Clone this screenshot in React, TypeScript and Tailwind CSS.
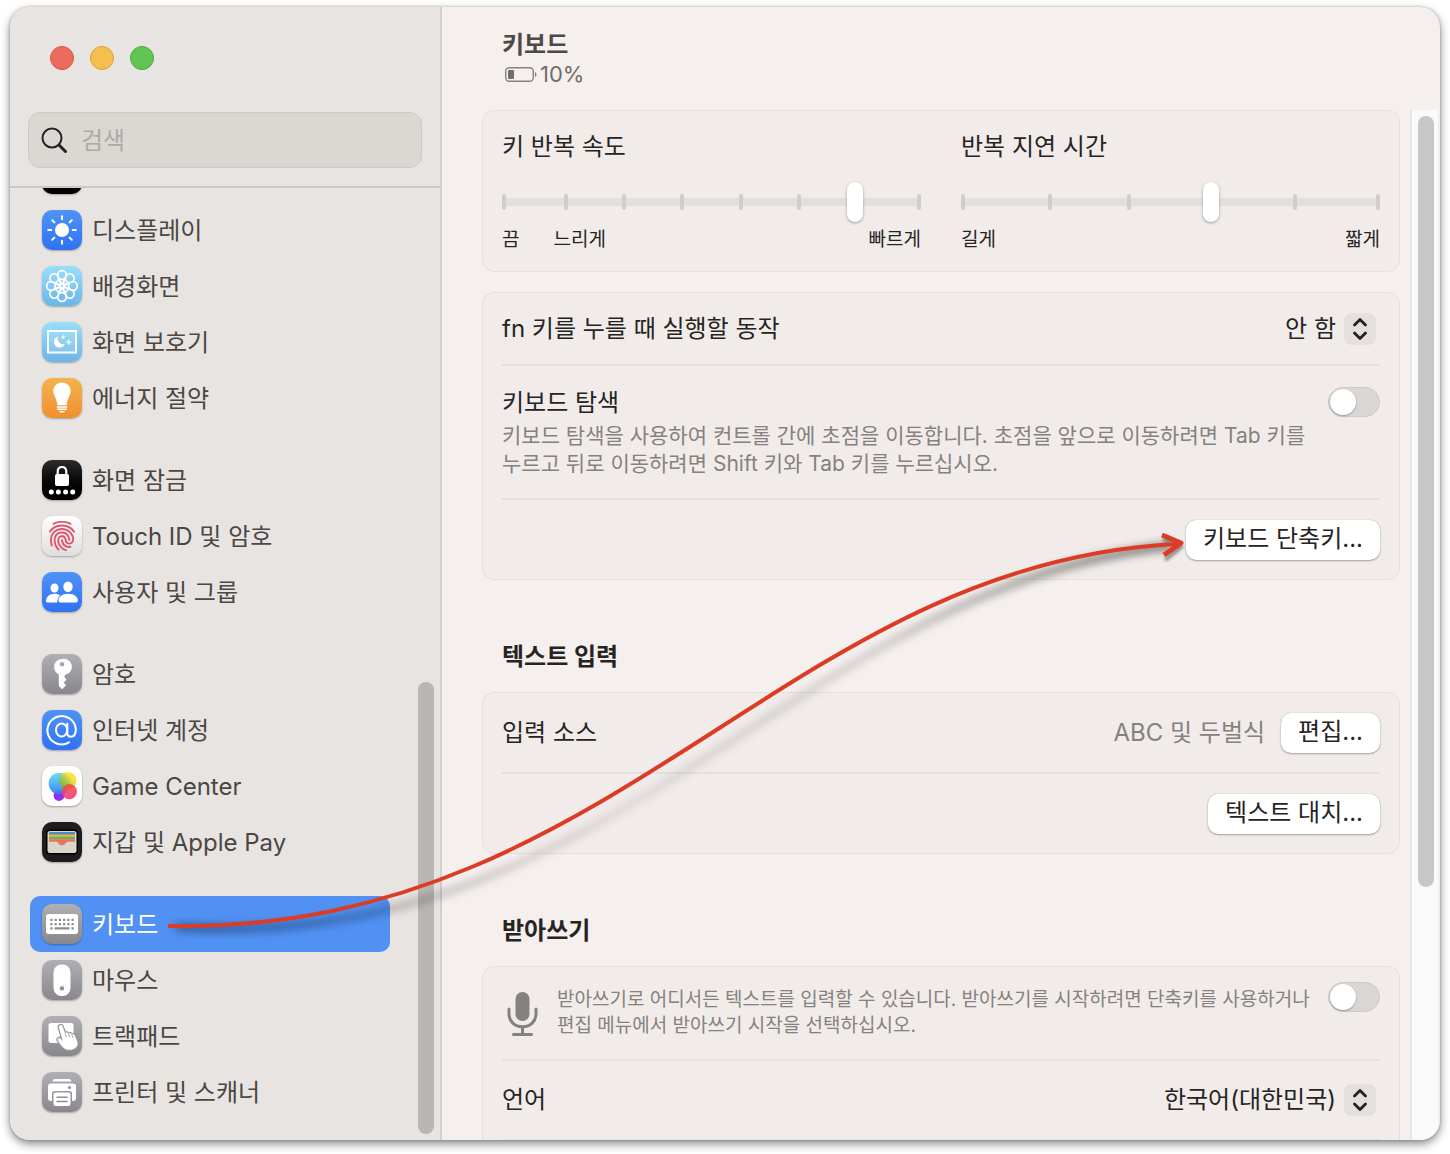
import { useState } from 'react';
import type { ReactNode } from 'react';
import { IoFingerPrint } from 'react-icons/io5';

interface NavItem {
  id: string;
  label: string;
  tile: string;
  icon: ReactNode;
}

const BLUE = 'bg-linear-to-b from-[#4f93f6] to-[#2f72f3]';
const SKY = 'bg-linear-to-b from-[#9adef8] to-[#6bb5e8]';
const GRAY = 'bg-linear-to-b from-[#b0b0b4] to-[#88888c]';
const BLACK = 'bg-linear-to-b from-[#2c2c2c] to-black';

function Glyph({ children }: { children: ReactNode }) {
  return (
    <svg viewBox="0 0 40 40" className="size-10" aria-hidden="true">
      {children}
    </svg>
  );
}

const EIGHT = [0, 45, 90, 135, 180, 225, 270, 315];

const groups: NavItem[][] = [
  [
    { id: 'dock', label: '데스크탑 및 Dock', tile: 'bg-black', icon: null },
    {
      id: 'display',
      label: '디스플레이',
      tile: BLUE,
      icon: (
        <Glyph>
          <circle cx="20" cy="20" r="7" fill="#fff" />
          {EIGHT.map((a) => (
            <path
              key={a}
              d="M20 6.2v3"
              stroke="#fff"
              strokeWidth="2"
              strokeLinecap="round"
              transform={`rotate(${a} 20 20)`}
            />
          ))}
        </Glyph>
      ),
    },
    {
      id: 'wallpaper',
      label: '배경화면',
      tile: SKY,
      icon: (
        <Glyph>
          <g fill="none" stroke="#fff" strokeWidth="1.7">
            {EIGHT.map((a) => (
              <g key={a} transform={`rotate(${a} 20 20)`}>
                <circle cx="20" cy="9" r="4.300" />
                <path d="M17 12.200 20 19l3-6.800" />
              </g>
            ))}
          </g>
          <circle cx="20" cy="20" r="2.400" fill="#fff" />
          <circle cx="20" cy="20" r="1" fill="#83c8ef" />
        </Glyph>
      ),
    },
    {
      id: 'screensaver',
      label: '화면 보호기',
      tile: SKY,
      icon: (
        <Glyph>
          <rect x="6" y="9" width="28" height="21.500" fill="#fff" fillOpacity=".12" stroke="#fff" strokeWidth="2" />
          <path d="M16.200 14.500a5.600 5.600 0 1 0 6.600 7.400 5.400 5.400 0 0 1-6.600-7.400Z" fill="#fff" />
          <path d="m21.300 12.500.7 1.800 1.800.7-1.800.7-.7 1.800-.7-1.800-1.800-.7 1.800-.7Z" fill="#fff" />
          <path d="m26.700 16.700.9 2.500 2.500.9-2.500.9-.9 2.500-.9-2.500-2.500-.9 2.500-.9Z" fill="#fff" />
        </Glyph>
      ),
    },
    {
      id: 'energy',
      label: '에너지 절약',
      tile: 'bg-linear-to-b from-[#f2b350] to-[#f08f30]',
      icon: (
        <Glyph>
          <path
            d="M20 4.500c-5 0-8.700 3.800-8.700 8.500 0 4.200 3 6.200 3.900 13.200.1.700.5 1 1.100 1h7.400c.6 0 1-.3 1.100-1 .9-7 3.900-9 3.900-13.200 0-4.700-3.700-8.500-8.700-8.500Z"
            fill="#fff"
          />
          <path d="M15.300 28.900h9.400M15.700 31.300h8.600" stroke="#fff" strokeWidth="1.500" strokeLinecap="round" />
          <path d="M17 33h6c-.4 1-1.500 1.500-3 1.500s-2.600-.5-3-1.500Z" fill="#fff" />
        </Glyph>
      ),
    },
  ],
  [
    {
      id: 'lock',
      label: '화면 잠금',
      tile: BLACK,
      icon: (
        <Glyph>
          <path d="M15.700 15v-3.200c0-2.800 1.700-4.800 4.300-4.800s4.300 2 4.300 4.800V15" fill="none" stroke="#fff" strokeWidth="2.200" />
          <rect x="13" y="14" width="14" height="12" rx="2" fill="#fff" />
          {[9.3, 16.4, 23.6, 30.7].map((x) => (
            <circle key={x} cx={x} cy="32" r="2.500" fill="#fff" />
          ))}
        </Glyph>
      ),
    },
    {
      id: 'touchid',
      label: 'Touch ID 및 암호',
      tile: 'bg-linear-to-b from-white to-[#dedede]',
      icon: <IoFingerPrint className="size-8 text-[#e0566f]" />,
    },
    {
      id: 'users',
      label: '사용자 및 그룹',
      tile: BLUE,
      icon: (
        <Glyph>
          <ellipse cx="12.500" cy="16" rx="4" ry="4.500" fill="#fff" />
          <path d="M4 29c0-4 3.600-7.200 8.500-7.200 2.400 0 4.300.6 5.700 1.700-1.900 1.500-3 3.900-3 6.900H5.500C4.500 30.400 4 30 4 29Z" fill="#fff" />
          <ellipse cx="26" cy="14.800" rx="4.700" ry="5.200" fill="#fff" />
          <path d="M16.500 28.600c0-4 4.200-6.800 9.700-6.800s9.700 2.800 9.700 6.800c0 1.200-.6 1.800-1.800 1.800H18.300c-1.200 0-1.800-.6-1.800-1.800Z" fill="#fff" />
        </Glyph>
      ),
    },
  ],
  [
    {
      id: 'passwords',
      label: '암호',
      tile: GRAY,
      icon: (
        <Glyph>
          <path
            fillRule="evenodd"
            d="M20 5a8 8 0 0 0-3.200 15.300V32l3.400 3.200 3.800-4-2.300-2.500 2.800-2.900-2.300-3.200 1.600-2A8 8 0 0 0 20 5Zm0 3a2.300 2.300 0 1 1 0 4.600A2.300 2.300 0 0 1 20 8Z"
            fill="#fff"
          />
        </Glyph>
      ),
    },
    {
      id: 'accounts',
      label: '인터넷 계정',
      tile: BLUE,
      icon: (
        <Glyph>
          <g fill="none" stroke="#fff" strokeWidth="2" strokeLinecap="round">
            <path d="M27 32.400a14.200 14.200 0 1 1 6.800-13.200c0 4.600-1.800 7.500-4.900 7.500-2.400 0-3.600-1.600-3.600-4V13.800" />
            <ellipse cx="19.600" cy="20" rx="5.600" ry="6.500" />
          </g>
        </Glyph>
      ),
    },
    {
      id: 'gamecenter',
      label: 'Game Center',
      tile: 'bg-white',
      icon: (
        <Glyph>
          <defs>
            <linearGradient id="gc-blue" x1="0" y1="0" x2="0" y2="1">
              <stop offset="0" stopColor="#5fdcf5" />
              <stop offset="1" stopColor="#2c7df0" />
            </linearGradient>
            <linearGradient id="gc-yellow" x1="1" y1="0" x2="0" y2="1">
              <stop offset=".3" stopColor="#fbe02a" />
              <stop offset="1" stopColor="#3fae3c" />
            </linearGradient>
            <linearGradient id="gc-red" x1="0" y1="0" x2="0" y2="1">
              <stop offset="0" stopColor="#f0503c" />
              <stop offset="1" stopColor="#f0357f" />
            </linearGradient>
          </defs>
          <circle cx="17" cy="29.500" r="5.400" fill="#8f2ff0" />
          <circle cx="17.500" cy="17.500" r="10.800" fill="url(#gc-blue)" fillOpacity=".92" />
          <circle cx="25.800" cy="14.800" r="8.800" fill="url(#gc-yellow)" fillOpacity=".88" />
          <circle cx="27.300" cy="25.600" r="7.700" fill="url(#gc-red)" fillOpacity=".88" />
        </Glyph>
      ),
    },
    {
      id: 'wallet',
      label: '지갑 및 Apple Pay',
      tile: 'bg-[#1d1d1f]',
      icon: (
        <Glyph>
          <rect x="4" y="7.500" width="32" height="25" rx="4" fill="#000" />
          <rect x="5.500" y="9" width="29" height="22" rx="2.500" fill="#dad7ca" />
          <path d="M7 11a1 1 0 0 1 1-1h24a1 1 0 0 1 1 1v2H7Z" fill="#4a90c8" />
          <path d="M7 12.500h26V15H7Z" fill="#efb340" />
          <path d="M7 14.800h26v2.600H7Z" fill="#69b35a" />
          <path d="M7 17.200h26v2.500h-7.500c-1.700 0-2.300 3.600-5.500 3.600s-3.800-3.600-5.500-3.600H7Z" fill="#e8745e" />
        </Glyph>
      ),
    },
  ],
  [
    {
      id: 'keyboard',
      label: '키보드',
      tile: GRAY,
      icon: (
        <Glyph>
          <rect x="4" y="10" width="32" height="20" rx="2.500" fill="#fff" />
          <g stroke="#8e8e92" strokeWidth="2.300">
            <path d="M8.300 15.800h24" strokeDasharray="2.200 2.050" />
            <path d="M8.300 20.100h24" strokeDasharray="2.200 2.050" />
            <path d="M8.300 24.400h2.200M12.500 24.400h15M29.500 24.400h2.200" />
          </g>
        </Glyph>
      ),
    },
    {
      id: 'mouse',
      label: '마우스',
      tile: GRAY,
      icon: (
        <Glyph>
          <rect x="11.500" y="4.500" width="17" height="31.500" rx="8" fill="#fff" />
          <path d="M20.300 26.300c.1-.8.600-1.300 1.300-1.400 0 .8-.5 1.300-1.300 1.400Z" fill="#8e8e92" />
          <circle cx="19.900" cy="28.400" r="2.200" fill="#8e8e92" />
        </Glyph>
      ),
    },
    {
      id: 'trackpad',
      label: '트랙패드',
      tile: GRAY,
      icon: (
        <Glyph>
          <rect x="6.500" y="7" width="25" height="20" rx="2.500" fill="#fff" />
          <path
            d="M16.900 11.600a1.900 1.900 0 0 1 3.600-1.300l2.500 7c.8-1.200 3-1 3.500.4 1-.9 2.800-.5 3.300.9 1-.6 2.500-.1 3 1.100l2 4.500c1.400 3 .9 6.200-1.900 8-3.300 2.100-7.500 2.200-10.500.3-2.700-1.700-4.900-5.200-6.600-8.200-.9-1.800 1.300-3.100 2.600-1.800l2.500 2.500Z"
            fill="#fff"
            stroke="#9a9a9e"
            strokeWidth="2.600"
            strokeLinejoin="round"
            paintOrder="stroke"
          />
          <path d="m23.200 17.800 1 3M26.700 18.200l1 2.800M30 19.200l1 2.500" stroke="#9a9a9e" strokeWidth=".8" strokeLinecap="round" />
        </Glyph>
      ),
    },
    {
      id: 'printer',
      label: '프린터 및 스캐너',
      tile: GRAY,
      icon: (
        <Glyph>
          <path d="M10.500 9.500c.2-1.500 1-2.500 2.600-2.500h13.800c1.600 0 2.400 1 2.600 2.500Z" fill="#fff" />
          <path
            d="M9 11.500h22a3 3 0 0 1 3 3V26a3 3 0 0 1-3 3h-1v-7.500a2.500 2.500 0 0 0-2.500-2.500h-15a2.500 2.500 0 0 0-2.500 2.500V29H9a3 3 0 0 1-3-3V14.500a3 3 0 0 1 3-3Z"
            fill="#fff"
          />
          <circle cx="27.500" cy="15.500" r="1.600" fill="#97979b" />
          <rect x="11.500" y="20.500" width="17" height="13.500" rx="2" fill="#fff" />
          <path d="M15 25.300h10M15 29.500h10" stroke="#8e8e92" strokeWidth="1.600" strokeLinecap="round" />
        </Glyph>
      ),
    },
  ],
];

function Sidebar({ active, onSelect }: { active: string; onSelect: (id: string) => void }) {
  return (
    <aside className="flex w-[432px] shrink-0 flex-col border-r-2 border-[#d3cfcc] bg-[#e8e4e1]">
      <div className="flex gap-4 px-10 pt-[39px]">
        <button aria-label="닫기" className="size-6 rounded-full border border-[#d45549] bg-[#ed6a5e]" />
        <button aria-label="최소화" className="size-6 rounded-full border border-[#d8a03c] bg-[#f5bf4f]" />
        <button aria-label="확대" className="size-6 rounded-full border border-[#4fa73e] bg-[#61c554]" />
      </div>

      <label className="mt-[42px] mr-[18px] ml-[18px] flex h-14 items-center gap-3 rounded-xl border border-[#cecac7] bg-[#dbd8d3] px-3">
        <svg viewBox="0 0 28 28" className="size-7 shrink-0" fill="none" stroke="#222" strokeLinecap="round" aria-hidden="true">
          <circle cx="11" cy="12" r="9.500" strokeWidth="2" />
          <path d="m18 19 6.500 6.500" strokeWidth="3" />
        </svg>
        <input
          type="search"
          aria-label="검색"
          placeholder="검색"
          className="min-w-0 flex-1 bg-transparent pt-[2px] leading-8 outline-none placeholder:text-[#aeaaa7]"
        />
      </label>

      <div className="mt-[18px] flex min-h-0 flex-1 overflow-hidden border-t-2 border-[#cbc7c5]">
        <nav className="-mt-[42px] flex-1 pl-5">
          {groups.map((items) => (
            <ul key={items[0].id} className="mb-[26px]">
              {items.map((item) => (
                <li key={item.id}>
                  <button
                    onClick={() => onSelect(item.id)}
                    className={`flex h-14 w-full items-center gap-[10px] rounded-[10px] pl-3 text-left ${
                      item.id === active ? 'bg-[#5091f3] text-white' : 'text-[#4a4745]'
                    }`}
                  >
                    <span
                      className={`flex size-10 items-center justify-center rounded-[10px] shadow-[0_1px_2px_rgba(0,0,0,0.3)] ${item.tile}`}
                    >
                      {item.icon}
                    </span>
                    <span className="pt-[2px]">{item.label}</span>
                  </button>
                </li>
              ))}
            </ul>
          ))}
        </nav>
        <div className="flex w-[50px] shrink-0 items-end justify-end pr-[6px] pb-[6px]">
          <div className="h-[452px] w-4 rounded-full bg-[#bab6b3]" />
        </div>
      </div>
    </aside>
  );
}

function Card({ children }: { children: ReactNode }) {
  return <div className="rounded-xl border border-[#e5e0dd] bg-[#f1ece9] px-[19px]">{children}</div>;
}

function Divider() {
  return <hr className="h-[2px] border-0 bg-[#e5e1de]" />;
}

function PushButton({ children }: { children: ReactNode }) {
  return (
    <button className="h-10 rounded-[10px] bg-white px-[17px] pb-[2px] shadow-[0_0_1px_rgba(0,0,0,0.3),0_1px_2px_rgba(0,0,0,0.3)]">
      {children}
    </button>
  );
}

function Toggle({ label }: { label: string }) {
  return (
    <input
      type="checkbox"
      role="switch"
      aria-label={label}
      className="h-[30px] w-[52px] shrink-0 appearance-none rounded-full border border-[#cdc9c6] bg-[#dad6d3] px-px py-px before:block before:size-[26px] before:rounded-full before:bg-white before:shadow-[0_1px_2px_rgba(0,0,0,0.3)] checked:bg-[#5091f3] checked:before:ml-[22px]"
    />
  );
}

function Picker({ id, options }: { id: string; options: string[] }) {
  return (
    <div className="relative mr-1 flex items-center">
      <select id={id} className="field-sizing-content h-8 appearance-none bg-transparent pr-10 leading-8 outline-none">
        {options.map((o) => (
          <option key={o}>{o}</option>
        ))}
      </select>
      <span className="pointer-events-none absolute right-0 flex size-8 items-center justify-center rounded-lg bg-[#e5e0dd]">
        <svg
          viewBox="0 0 32 32"
          className="size-8"
          fill="none"
          stroke="#222"
          strokeWidth="2.800"
          strokeLinecap="round"
          strokeLinejoin="round"
          aria-hidden="true"
        >
          <path d="m10.500 12 5.500-5.500 5.500 5.500M10.500 20l5.500 5.500 5.500-5.500" />
        </svg>
      </span>
    </div>
  );
}

interface TickSliderProps {
  id: string;
  label: string;
  ticks: number[];
  value: number;
  children: ReactNode;
}

// ticks are percentages of the track width
function TickSlider({ id, label, ticks, value, children }: TickSliderProps) {
  return (
    <div className="min-w-0 flex-1">
      <label htmlFor={id} className="block leading-8">
        {label}
      </label>
      <div className="relative mt-[19px] flex h-10 items-center">
        <div className="h-2 w-full bg-[#e3dfdc]" />
        <div className="absolute inset-x-[2px] top-3 h-4">
          {ticks.map((t) => (
            <span key={t} className="absolute h-4 w-1 -translate-x-1/2 rounded-sm bg-[#d1cdca]" style={{ left: `${t}%` }} />
          ))}
        </div>
        <input
          id={id}
          type="range"
          step="any"
          defaultValue={value}
          className="absolute inset-0 h-10 w-full appearance-none bg-transparent [&::-webkit-slider-thumb]:h-10 [&::-webkit-slider-thumb]:w-4 [&::-webkit-slider-thumb]:appearance-none [&::-webkit-slider-thumb]:rounded-full [&::-webkit-slider-thumb]:bg-white [&::-webkit-slider-thumb]:shadow-[0_1px_3px_rgba(0,0,0,0.35)]"
        />
      </div>
      <div className="mt-1 flex text-[19px] leading-7">{children}</div>
    </div>
  );
}

function SectionTitle({ children }: { children: ReactNode }) {
  return <h2 className="px-5 pt-[61px] pb-[19px] leading-8 font-bold">{children}</h2>;
}

export default function App() {
  const [active, setActive] = useState('keyboard');

  return (
    <div className="relative h-screen overflow-hidden bg-white px-[10px] pt-[7px] pb-[14px] font-['Inter','Noto_Sans_CJK_KR',sans-serif] text-2xl text-[#262423]">
      <div className="flex h-full overflow-hidden rounded-[20px] bg-[#f5f0ed] shadow-[0_4px_10px_rgba(0,0,0,0.45),0_0_3px_rgba(0,0,0,0.25)]">
        <Sidebar active={active} onSelect={setActive} />

        <main className="flex min-w-0 flex-1 flex-col">
          <header className="px-[60px] pt-[22px] pb-[21px] text-[#4d4947]">
            <h1 className="leading-8 font-bold">키보드</h1>
            <p className="flex h-7 items-center gap-[2px] text-[22px] text-[#716d6b]">
              <svg viewBox="0 0 34 18" className="ml-[2px] h-[18px] w-[34px]" aria-hidden="true">
                <rect x="1.700" y="1.700" width="27.600" height="13.600" rx="3.500" fill="none" stroke="#85817f" strokeWidth="1.400" />
                <rect x="4" y="4" width="6" height="9" rx="1" fill="#716d6b" />
                <path d="M31 6c2 .7 2 4.300 0 5Z" fill="#85817f" />
              </svg>
              10%
            </p>
          </header>

          <div className="flex min-h-0 flex-1 overflow-hidden">
            <div className="min-w-0 flex-1 pr-[10px] pl-10">
              <Card>
                <div className="flex gap-10 pt-5 pb-[17px]">
                  <TickSlider id="repeat-rate" label="키 반복 속도" ticks={[0, 15, 29, 43, 57, 71, 85, 100]} value={85.5}>
                    <span className="mr-[34px]">끔</span>
                    <span>느리게</span>
                    <span className="ml-auto">빠르게</span>
                  </TickSlider>
                  <TickSlider id="repeat-delay" label="반복 지연 시간" ticks={[0, 21, 40, 60, 80, 100]} value={60}>
                    <span>길게</span>
                    <span className="ml-auto">짧게</span>
                  </TickSlider>
                </div>
              </Card>

              <div className="mt-5">
                <Card>
                  <div className="flex h-[71px] items-center justify-between">
                    <label htmlFor="fn-action">fn 키를 누를 때 실행할 동작</label>
                    <Picker id="fn-action" options={['안 함', '입력 소스 변경', '받아쓰기 시작']} />
                  </div>
                  <Divider />
                  <div className="flex h-[132px] items-start justify-between pt-[21px]">
                    <div>
                      <p className="leading-8">키보드 탐색</p>
                      <p className="mt-[3px] text-[21px] leading-7 text-[#85817f]">
                        키보드 탐색을 사용하여 컨트롤 간에 초점을 이동합니다. 초점을 앞으로 이동하려면 Tab 키를
                        <br />
                        누르고 뒤로 이동하려면 Shift 키와 Tab 키를 누르십시오.
                      </p>
                    </div>
                    <Toggle label="키보드 탐색" />
                  </div>
                  <Divider />
                  <div className="flex h-[79px] items-center justify-end">
                    <PushButton>키보드 단축키...</PushButton>
                  </div>
                </Card>
              </div>

              <SectionTitle>텍스트 입력</SectionTitle>
              <Card>
                <div className="flex h-[79px] items-center">
                  <span className="flex-1">입력 소스</span>
                  <span className="mr-4 text-[#85817f]">ABC 및 두벌식</span>
                  <PushButton>편집...</PushButton>
                </div>
                <Divider />
                <div className="flex h-[79px] items-center justify-end">
                  <PushButton>텍스트 대치...</PushButton>
                </div>
              </Card>

              <SectionTitle>받아쓰기</SectionTitle>
              <Card>
                <div className="flex h-[92px] items-start pt-[15px]">
                  <svg viewBox="0 0 32 46" className="mt-[9px] mr-[19px] ml-1 h-[46px] w-8 shrink-0" aria-hidden="true">
                    <rect x="9.500" y="1" width="14" height="29" rx="7" fill="#85817f" />
                    <path
                      d="M3 18v4.500c0 8 5.600 13.300 13.500 13.300S30 30.500 30 22.500V18M16.500 36v7.500M7.500 43.500h18"
                      fill="none"
                      stroke="#85817f"
                      strokeWidth="3"
                      strokeLinecap="round"
                    />
                  </svg>
                  <p className="mt-[5px] flex-1 text-[19px] leading-[26px] text-[#85817f]">
                    받아쓰기로 어디서든 텍스트를 입력할 수 있습니다. 받아쓰기를 시작하려면 단축키를 사용하거나
                    <br />
                    편집 메뉴에서 받아쓰기 시작을 선택하십시오.
                  </p>
                  <Toggle label="받아쓰기" />
                </div>
                <Divider />
                <div className="flex h-[78px] items-center justify-between">
                  <label htmlFor="language">언어</label>
                  <Picker id="language" options={['한국어(대한민국)', '영어(미국)']} />
                </div>
                <Divider />
                <div className="h-20" />
              </Card>
            </div>

            <div className="w-7 shrink-0 border-l-2 border-[#e8e6e5] bg-[#fafafa] pt-[6px] pl-[6px]">
              <div className="h-[771px] w-4 rounded-full bg-[#c7c7c7]" />
            </div>
            <div className="w-[2px] shrink-0 bg-[#f2f0ef]" />
          </div>
        </main>
      </div>

      {/* callout arrow from the sidebar row to the shortcuts button */}
      <svg
        viewBox="0 0 1450 1154"
        className="pointer-events-none absolute top-0 left-0 h-[1154px] w-[1450px]"
        fill="none"
        aria-hidden="true"
      >
        <defs>
          <filter id="arrow-shadow" x="-5%" y="-5%" width="110%" height="115%">
            <feGaussianBlur stdDeviation="4" />
          </filter>
          <filter id="head-shadow" x="-20%" y="-50%" width="140%" height="200%">
            <feGaussianBlur stdDeviation="1.500" />
          </filter>
          <linearGradient id="shadow-fade" gradientUnits="userSpaceOnUse" x1="170" y1="0" x2="1180" y2="0">
            <stop offset="0" stopColor="#000" stopOpacity=".45" />
            <stop offset=".25" stopColor="#000" stopOpacity=".22" />
            <stop offset=".45" stopColor="#000" stopOpacity=".1" />
            <stop offset=".7" stopColor="#000" stopOpacity=".17" />
            <stop offset="1" stopColor="#000" stopOpacity=".6" />
          </linearGradient>
        </defs>
        <path
          d="M176 927C614 958 800 584 1172 546"
          stroke="url(#shadow-fade)"
          strokeWidth="7"
          filter="url(#arrow-shadow)"
        />
        <path
          d="m1163 539 18 8-16 13"
          stroke="#000"
          strokeOpacity=".4"
          strokeWidth="4"
          filter="url(#head-shadow)"
        />
        <path d="M168 926C615 934 785 562 1178 544" stroke="#dc3c26" strokeWidth="4" />
        <path d="m1162 535 19 8-17 12" stroke="#dc3c26" strokeWidth="5" strokeLinejoin="round" />
      </svg>
    </div>
  );
}
